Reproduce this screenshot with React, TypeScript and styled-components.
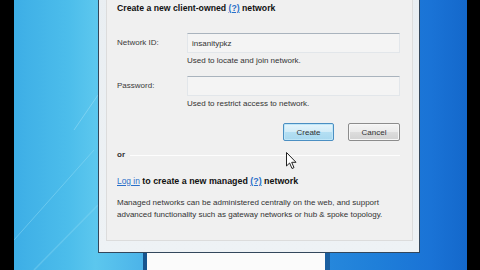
import styled, { createGlobalStyle } from "styled-components";

const Global = createGlobalStyle`
  html, body {
    margin: 0;
    padding: 0;
    width: 480px;
    height: 270px;
    overflow: hidden;
    background: #000;
  }
  * {
    box-sizing: border-box;
  }
`;

const Screen = styled.div`
  display: flex;
  width: 480px;
  height: 270px;
  background: #000;
  font-family: "Liberation Sans", Arial, sans-serif;
  font-size: 8px;
  color: #2a2a2a;
`;

const Desktop = styled.div`
  position: relative;
  flex: 1;
  margin: 0 13px 0 14px;
  overflow: hidden;
  background: linear-gradient(
    90deg,
    #3daee6 0%,
    #4cbdeb 12%,
    #5cc7ee 18%,
    #3a9ee3 40%,
    #1f7fd9 80%,
    #1a73d6 92%,
    #1468cb 100%
  );
`;

const Streaks = styled.svg`
  position: absolute;
  left: 0;
  top: 0;
`;

const BackWindow = styled.div`
  position: absolute;
  left: 129px;
  top: 236px;
  width: 187px;
  height: 40px;
  background: #fbfbfb;
  border-left: 4px solid #17548e;
  border-right: 5px solid #1b5fa0;
`;

const Window = styled.div`
  position: absolute;
  left: 84px;
  top: -14px;
  width: 322px;
  height: 267px;
  border: 1px solid #33475c;
  background: linear-gradient(180deg, #e9eef2 0%, #eef2f5 100%);
  padding: 8px 9px 11px 7px;
  display: flex;
`;

const Panel = styled.div`
  flex: 1;
  background: #f0f0f0;
  border: 1px solid #dcdcdc;
  padding: 6px 12px 0 10px;
  display: flex;
  flex-direction: column;
`;

const Heading = styled.div`
  font-weight: bold;
  font-size: 8.7px;
  line-height: 12px;
  color: #111;
`;

const Help = styled.span`
  color: #2a6fc9;
  text-decoration: underline;
  font-weight: bold;
`;

const Field = styled.div<{ $top: number }>`
  display: grid;
  grid-template-columns: 70px 213px;
  align-items: center;
  margin-top: ${(p) => p.$top}px;
`;

const Label = styled.div`
  color: #3a3a3a;
  line-height: 12px;
`;

const Input = styled.div`
  height: 20px;
  border: 1px solid #e2e6ea;
  border-top-color: #a9b3bd;
  background: #f4f4f4;
  padding-left: 4px;
  display: flex;
  align-items: center;
  color: #333;
`;

const Hint = styled.div`
  margin-left: 70px;
  margin-top: 2px;
  line-height: 12px;
  color: #333;
`;

const Buttons = styled.div`
  display: flex;
  justify-content: flex-end;
  gap: 14px;
  margin-top: 13px;
  width: 283px;
`;

const Button = styled.div<{ $primary?: boolean }>`
  width: ${(p) => (p.$primary ? 51 : 52)}px;
  height: 18px;
  border-radius: 2px;
  display: flex;
  align-items: center;
  justify-content: center;
  color: #333;
  border: 1px solid ${(p) => (p.$primary ? "#4b8fc2" : "#8c8c8c")};
  background: ${(p) =>
    p.$primary
      ? "linear-gradient(180deg, #e6f5fc 0%, #d2ecf8 50%, #b4dff3 51%, #a8d8ef 100%)"
      : "linear-gradient(180deg, #f4f4f4 0%, #ebebeb 50%, #dddddd 51%, #d2d2d2 100%)"};
  box-shadow: inset 0 0 0 1px ${(p) => (p.$primary ? "#bfe6f8" : "#f7f7f7")};
`;

const OrRow = styled.div`
  display: flex;
  align-items: center;
  gap: 5px;
  margin-top: 8px;
  width: 283px;
  line-height: 12px;
  font-weight: bold;
  color: #333;
`;

const Rule = styled.div`
  flex: 1;
  height: 1px;
  background: #a8a8a8;
  border-bottom: 1px solid #fdfdfd;
`;

const LoginLine = styled.div`
  margin-top: 14px;
  line-height: 12px;
  font-weight: bold;
  font-size: 8.9px;
  color: #111;
`;

const Link = styled.span`
  color: #2a6fc9;
  text-decoration: underline;
  font-weight: normal;
  font-size: 8.4px;
`;

const Para = styled.div`
  margin-top: 10px;
  line-height: 11.5px;
  color: #333;
`;

const Cursor = styled.svg`
  position: absolute;
  left: 272px;
  top: 152px;
`;

export default function App() {
  return (
    <>
      <Global />
      <Screen>
        <Desktop>
          <Streaks width="100" height="270" viewBox="0 0 100 270">
            <path d="M0 240 L80 150" stroke="#8fdcf5" strokeWidth="1" opacity="0.5" />
            <path d="M20 270 L84 205" stroke="#8fdcf5" strokeWidth="1.5" opacity="0.35" />
            <path d="M60 130 L84 95" stroke="#9fe0f7" strokeWidth="1" opacity="0.5" />
          </Streaks>
          <BackWindow />
          <Window>
            <Panel>
              <Heading>
                Create a new client-owned <Help>(?)</Help> network
              </Heading>
              <Field $top={19}>
                <Label>Network ID:</Label>
                <Input>insanitypkz</Input>
              </Field>
              <Hint>Used to locate and join network.</Hint>
              <Field $top={9}>
                <Label>Password:</Label>
                <Input />
              </Field>
              <Hint>Used to restrict access to network.</Hint>
              <Buttons>
                <Button $primary>Create</Button>
                <Button>Cancel</Button>
              </Buttons>
              <OrRow>
                or
                <Rule />
              </OrRow>
              <LoginLine>
                <Link>Log in</Link> to create a new managed <Help>(?)</Help> network
              </LoginLine>
              <Para>
                Managed networks can be administered centrally on the web, and support
                <br />
                advanced functionality such as gateway networks or hub &amp; spoke topology.
              </Para>
            </Panel>
          </Window>
          <Cursor width="12" height="18" viewBox="0 0 12 18">
            <path
              d="M0.5 0.5 L0.5 14 L3.6 11 L6 16.5 L8 15.6 L5.7 10.3 L10 10.3 Z"
              fill="#fff"
              stroke="#222"
              strokeWidth="1"
              strokeLinejoin="round"
            />
          </Cursor>
        </Desktop>
      </Screen>
    </>
  );
}
